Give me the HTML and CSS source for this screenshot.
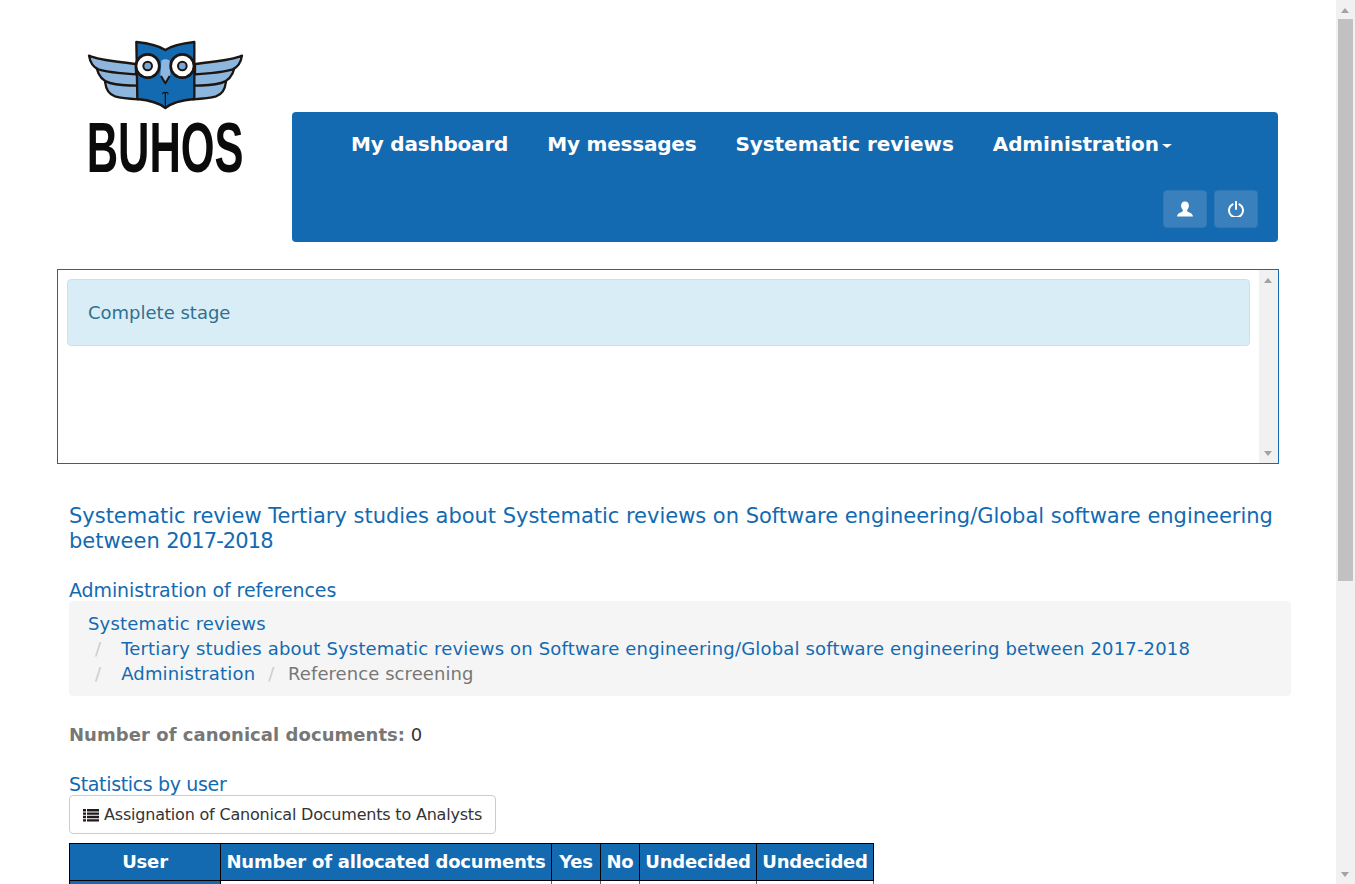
FILE: index.html
```html
<!DOCTYPE html>
<html lang="en">
<head>
<meta charset="utf-8">
<title>Buhos</title>
<link rel="stylesheet" href="styles.css">
</head>
<body>
<div class="page-scrollbar" aria-hidden="true">
  <span class="arrow-up"></span>
  <span class="page-thumb"></span>
  <span class="arrow-down"></span>
</div>
<div class="container">
  <header class="top">
    <div class="logo">
      <svg class="owl" width="220" height="170" viewBox="0 0 660 510">
        <defs>
          <g id="wing" fill="#8db6de" stroke="#1c1512" stroke-width="7" stroke-linejoin="round">
            <path d="M135 185 C165 190 200 190 234 190 L234 238 C205 236 180 233 165 229 C148 224 138 210 135 185 Z"/>
            <path d="M110 145 C150 150 190 150 230 150 L234 197 C200 197 170 194 150 189 C130 184 116 170 110 145 Z"/>
            <path d="M87 107 C120 122 170 124 228 132 L228 163 C180 160 140 156 115 148 C100 142 90 125 87 107 Z"/>
          </g>
        </defs>
        <use href="#wing"/>
        <use href="#wing" transform="translate(633 0) scale(-1 1)"/>
        <path d="M229 66 C265 70 295 76 316 90 C337 76 368 70 403 66 L403 237 C370 240 338 246 316 264 C294 246 262 240 232 237 Z" fill="#136ab1" stroke="#1c1512" stroke-width="7" stroke-linejoin="round"/>
        <path d="M316 218 V262 M307 222 C311 216 314 216 316 220 C318 216 321 216 325 222" fill="none" stroke="#1c1512" stroke-width="4"/>
        <path d="M304 122 C308 116 325 116 329 122 L331 165 L316 190 L301 165 Z" fill="#8db6de" stroke="none"/>
        <path d="M303 168 L316 190 L329 168" fill="none" stroke="#1c1512" stroke-width="6" stroke-linejoin="round"/>
        <circle cx="263" cy="138" r="35" fill="#fff" stroke="#1c1512" stroke-width="8"/>
        <circle cx="367" cy="138" r="35" fill="#fff" stroke="#1c1512" stroke-width="8"/>
        <circle cx="263" cy="138" r="13" fill="#7ba6d2" stroke="#1c1512" stroke-width="6"/>
        <circle cx="367" cy="138" r="13" fill="#7ba6d2" stroke="#1c1512" stroke-width="6"/>
        <text class="wordmark" transform="translate(80 457) scale(0.615 1)">BUHOS</text>
      </svg>
    </div>
    <nav class="navbar">
      <ul class="nav-links">
        <li><a href="#">My dashboard</a></li>
        <li><a href="#">My messages</a></li>
        <li><a href="#">Systematic reviews</a></li>
        <li><a href="#">Administration<span class="caret"></span></a></li>
      </ul>
      <div class="nav-buttons">
        <button class="nav-btn" aria-label="User">
          <svg width="16" height="16" viewBox="0 0 16 16"><path fill="#fff" d="M8 0.500c2.700 0 3.900 1.900 3.900 4.100 0 1.700-.7 3.400-1.700 4.200v1.500c0 .8 5.400 1.300 5.800 5.200H0c.4-3.900 5.800-4.400 5.800-5.200V8.800C4.800 8 4.100 6.300 4.100 4.600 4.100 2.400 5.300 0.500 8 0.500z"/></svg>
        </button>
        <button class="nav-btn" aria-label="Log out">
          <svg width="16" height="16" viewBox="0 0 16 16"><path fill="none" stroke="#fff" stroke-width="2" stroke-linecap="round" d="M4.500 3.300a7 7 0 1 0 7 0M8 0.900v7"/></svg>
        </button>
      </div>
    </nav>
  </header>

  <section class="messages">
    <div class="messages-body">
      <div class="alert">Complete stage</div>
    </div>
    <div class="box-scrollbar" aria-hidden="true">
      <span class="arrow-up"></span>
      <span class="arrow-down"></span>
    </div>
  </section>

  <main class="content">
    <h2 class="page-title">Systematic review Tertiary studies about Systematic reviews on Software engineering/Global software engineering between <span class="years">2017-2018</span></h2>
    <h3 class="section-title first">Administration of references</h3>
    <ol class="breadcrumb">
      <li><a href="#">Systematic reviews</a></li>
      <li><a href="#">Tertiary studies about Systematic reviews on Software engineering/Global software engineering between 2017-2018</a></li>
      <li><a href="#">Administration</a></li>
      <li class="active">Reference screening</li>
    </ol>
    <p class="count"><strong>Number of canonical documents:</strong> 0</p>
    <h3 class="section-title second">Statistics by user</h3>
    <a class="btn" href="#">
      <svg width="16" height="14" viewBox="0 0 16 14"><path fill="#1f1a17" d="M0 1h3v2.400H0zM4 1h12v2.400H4zM0 4.400h3v2.400H0zM4 4.400h12v2.400H4zM0 7.800h3v2.400H0zM4 7.800h12v2.400H4zM0 11.200h3v2.400H0zM4 11.200h12v2.400H4z"/></svg>
      Assignation of Canonical Documents to Analysts
    </a>
    <table class="stats">
      <colgroup>
        <col class="c-user"><col class="c-num"><col class="c-yes"><col class="c-no"><col class="c-und"><col class="c-und">
      </colgroup>
      <thead>
        <tr><th>User</th><th>Number of allocated documents</th><th>Yes</th><th>No</th><th>Undecided</th><th>Undecided</th></tr>
      </thead>
      <tbody>
        <tr><th>Analyst</th><td>0</td><td>0</td><td>0</td><td>0</td><td>0</td></tr>
        <tr><th>Administrator</th><td>0</td><td>0</td><td>0</td><td>0</td><td>0</td></tr>
      </tbody>
    </table>
  </main>
</div>
</body>
</html>
```
FILE: styles.css
```css
* { box-sizing: border-box; }
html { overflow-x: hidden; }
body {
  margin: 0;
  font-family: "DejaVu Sans", sans-serif;
  font-size: 14px;
  line-height: 1.43;
  color: #333;
  background: #fff;
}
a { color: #136ab1; text-decoration: none; }

.page-scrollbar {
  position: fixed;
  top: 0;
  right: 0;
  bottom: 0;
  width: 19px;
  background: #f1f1f1;
  z-index: 10;
}
.page-thumb {
  position: absolute;
  top: 19px;
  left: 2px;
  width: 15px;
  height: 562px;
  background: #c1c1c1;
}
.arrow-up, .arrow-down {
  position: absolute;
  left: 5px;
  width: 0;
  height: 0;
  border-left: 4.500px solid transparent;
  border-right: 4.500px solid transparent;
}
.arrow-up { top: 8px; border-bottom: 5px solid #a3a3a3; }
.arrow-down { bottom: 7px; border-top: 5px solid #a3a3a3; }

.container {
  width: 1222px;
  margin-left: 57px;
  padding-bottom: 300px;
}
.top { display: flex; align-items: flex-start; height: 269px; }
.logo { width: 235px; padding: 20px 0 0 3px; }
.owl { display: block; }
.wordmark {
  font-family: "Liberation Sans", sans-serif;
  font-weight: 700;
  font-size: 212px;
  fill: #0b0b0b;
}
.navbar {
  width: 986px;
  height: 130px;
  margin-top: 112px;
  background: #136ab1;
  border-radius: 4px;
}
.nav-links {
  list-style: none;
  margin: 0;
  padding: 0 0 0 39px;
  display: flex;
  height: 64px;
}
.nav-links a {
  display: block;
  padding: 21px 20px;
  font-size: 20px;
  line-height: 22px;
  font-weight: 700;
  letter-spacing: -0.2px;
  color: #fff;
}
.nav-links li:nth-child(2) { margin-left: -1px; }
.nav-links li:nth-child(3) { margin-left: -1px; }
.nav-links li:nth-child(4) { margin-left: -1px; }
.nav-links li:nth-child(3) a { letter-spacing: -0.05px; }
.nav-links li:nth-child(4) a { letter-spacing: -0.13px; }
.caret {
  display: inline-block;
  margin-left: 3px;
  vertical-align: middle;
  border-top: 4px solid #fff;
  border-left: 5.500px solid transparent;
  border-right: 5.500px solid transparent;
}
.nav-buttons { display: flex; justify-content: flex-end; gap: 7px; padding: 14px 20px 0 0; }
.nav-btn {
  width: 44px;
  height: 38px;
  padding: 0;
  display: flex;
  align-items: center;
  justify-content: center;
  background: #3a80bd;
  border: 1px solid #2f79b8;
  border-radius: 4px;
}
.messages {
  height: 195px;
  border: 1px solid #136ab1;
  display: flex;
}
.messages-body { flex: 1; padding: 9px 9px 0; }
.box-scrollbar {
  position: relative;
  width: 19px;
  background: #f1f1f1;
}
.alert {
  height: 67px;
  padding: 21px 20px 20px;
  font-size: 18px;
  line-height: 24px;
  background: #d9edf7;
  border: 1px solid #bce8f1;
  border-radius: 4px;
  color: #31708f;
}
.content { padding: 0 0 0 12px; width: 1234px; }
.page-title {
  margin: 40px 0 0;
  font-size: 21px;
  line-height: 25px;
  font-weight: 400;
  letter-spacing: -0.02px;
  color: #136ab1;
}
.years { letter-spacing: -0.9px; }
.section-title {
  margin: 0;
  font-size: 19px;
  line-height: 22px;
  font-weight: 400;
  letter-spacing: -0.1px;
  color: #136ab1;
}
.section-title.first { margin-top: 25px; }
.section-title.second { margin-top: 25px; letter-spacing: -0.35px; }
.breadcrumb {
  list-style: none;
  margin: 0;
  padding: 10px 19px;
  background: #f5f5f5;
  border-radius: 4px;
  font-size: 18px;
  line-height: 25px;
  letter-spacing: 0.17px;
}
.breadcrumb li { display: inline-block; }
.breadcrumb li + li::before {
  content: "/\00a0";
  padding: 0 14px 0 7px;
  color: #ccc;
}
.breadcrumb .active::before { padding-right: 8px; }
.breadcrumb .active { color: #777; letter-spacing: 0.07px; }
.count { margin: 26px 0 0; font-size: 18px; line-height: 26px; color: #333; }
.count strong { color: #777; letter-spacing: 0.05px; }
.btn {
  display: inline-flex;
  align-items: center;
  gap: 5px;
  height: 39px;
  padding: 1px 13px 0;
  border: 1px solid #ccc;
  border-radius: 4px;
  background: #fff;
  color: #333;
  font-size: 16px;
  letter-spacing: -0.2px;
}
.stats {
  width: 804px;
  table-layout: fixed;
  margin-top: 9px;
  border-collapse: collapse;
  font-size: 18px;
  line-height: 25px;
}
.c-user { width: 151px; }
.c-num { width: 331px; }
.c-yes { width: 49px; }
.c-no { width: 39px; }
.c-und { width: 117px; }
.stats th, .stats td { border: 1px solid #666; padding: 5px 0 6px; text-align: center; }
.stats thead th, .stats tbody th { border-color: #000; background: #136ab1; color: #fff; letter-spacing: -0.2px; white-space: nowrap; }
```
